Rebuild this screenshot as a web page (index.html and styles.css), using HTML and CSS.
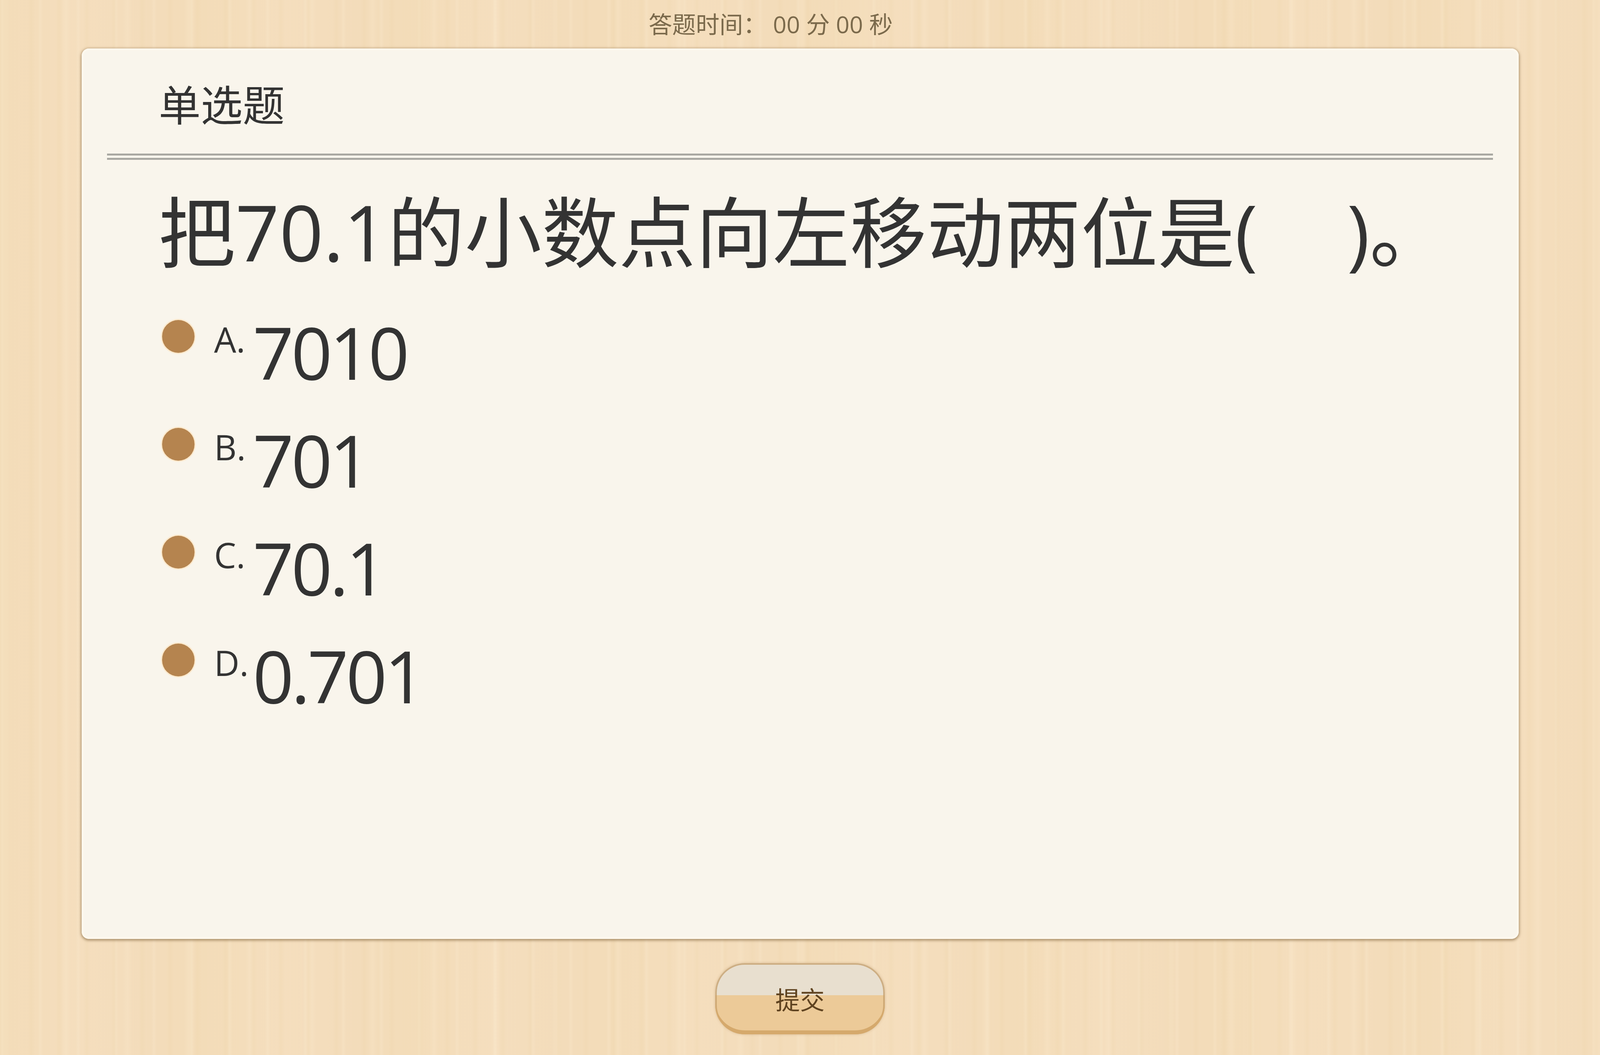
FILE: index.html
```html
<!DOCTYPE html>
<html lang="zh-CN">
<head>
<meta charset="utf-8">
<title>单选题</title>
<link rel="stylesheet" href="styles.css">
</head>
<body>
<header class="timer">答题时间： 00 分 00 秒</header>
<main class="card">
  <h2 class="kind">单选题</h2>
  <h1 class="question">把70.1的小数点向左移动两位是(<span class="blank"></span>)。</h1>
  <ul class="options">
    <li class="option"><span class="dot"></span><span class="letter">A.</span><span class="value">7010</span></li>
    <li class="option"><span class="dot"></span><span class="letter">B.</span><span class="value">701</span></li>
    <li class="option"><span class="dot"></span><span class="letter">C.</span><span class="value">70.1</span></li>
    <li class="option"><span class="dot"></span><span class="letter">D.</span><span class="value">0.701</span></li>
  </ul>
</main>
<footer class="actions"><button class="submit" type="button">提交</button></footer>
</body>
</html>
```
FILE: styles.css
```css
:root {
  --u: calc(100vw / 4799);
  --v: calc(100vh / 2700);
}
* { box-sizing: border-box; }
html, body { margin: 0; padding: 0; }
body {
  width: 100%;
  height: 100vh;
  overflow: hidden;
  display: flex;
  flex-direction: column;
  font-family: "Open Sans", "Noto Sans CJK SC", sans-serif;
  color: #333;
  background-color: #f4ddbc;
  background-image:
    repeating-linear-gradient(90deg, rgba(255,244,222,0) 0, rgba(255,244,222,.16) 6px, rgba(255,244,222,0) 13px, rgba(255,244,222,0) 97px),
    repeating-linear-gradient(90deg, rgba(234,208,160,0) 0, rgba(234,208,160,.16) 9px, rgba(234,208,160,0) 19px, rgba(234,208,160,0) 71px),
    repeating-linear-gradient(90deg, rgba(255,240,215,0) 0, rgba(255,240,215,.18) 12px, rgba(255,240,215,0) 24px, rgba(255,240,215,0) 157px),
    repeating-linear-gradient(90deg, rgba(240,216,170,.2) 0, rgba(248,226,196,.2) 211px, rgba(238,214,176,.14) 389px, rgba(240,216,170,.2) 523px);
}
.timer {
  flex: none;
  height: calc(var(--v) * 124);
  padding-right: calc(var(--u) * 176);
  display: flex;
  align-items: center;
  justify-content: center;
  font-size: calc(var(--u) * 71);
  line-height: calc(var(--v) * 124);
  color: #7b6a4c;
  white-space: pre;
}
.card {
  flex: none;
  height: calc(var(--v) * 2279);
  margin: 0 calc(var(--u) * 244) 0 calc(var(--u) * 245);
  padding: 0 calc(var(--u) * 77) 0 calc(var(--u) * 76);
  background: #f9f5ec;
  border-radius: calc(var(--u) * 22);
  box-shadow: inset 0 0 0 5px #fdf8ee, 0 2px 6px 2px rgba(125,95,55,.6);
}
.kind {
  margin: 0;
  height: calc(var(--v) * 285);
  padding: calc(var(--v) * 70) 0 0 calc(var(--u) * 155);
  border-bottom: calc(var(--v) * 16) double #a9a8a2;
  font-size: calc(var(--u) * 126);
  line-height: calc(var(--v) * 150);
  font-weight: 400;
}
.question {
  margin: 0;
  padding: calc(var(--v) * 14) 0 0 calc(var(--u) * 154);
  font-size: calc(var(--u) * 231);
  line-height: calc(var(--v) * 340);
  font-weight: 400;
  white-space: nowrap;
}
.blank { display: inline-block; width: calc(var(--u) * 268); }
.options {
  list-style: none;
  margin: calc(var(--v) * 49) 0 0;
  padding: 0 0 0 calc(var(--u) * 165);
}
.option {
  display: flex;
  align-items: flex-start;
  height: calc(var(--v) * 276);
}
.dot {
  flex: none;
  width: calc(var(--u) * 98);
  height: calc(var(--u) * 98);
  margin-top: calc(var(--v) * 49 - var(--u) * 49);
  border-radius: 50%;
  background: #b5844f;
  box-shadow: 0 0 0 3px #fbe9cd;
}
.letter {
  flex: none;
  width: calc(var(--u) * 116);
  margin-left: calc(var(--u) * 58);
  font-size: calc(var(--u) * 105);
  line-height: calc(var(--v) * 110);
}
.value {
  font-size: calc(var(--u) * 216);
  line-height: calc(var(--v) * 178);
  letter-spacing: calc(var(--u) * -8);
}
.actions {
  flex: 1;
  display: flex;
  justify-content: center;
  padding-top: calc(var(--v) * 62);
}
.submit {
  width: calc(var(--u) * 508);
  height: calc(var(--v) * 182);
  padding: 0;
  border: 0;
  border-radius: calc(var(--u) * 88);
  font: inherit;
  font-size: calc(var(--u) * 74);
  color: #5f4320;
  background: linear-gradient(180deg, #e8dfcf 0 45%, #ecca98 45% 100%);
  box-shadow: inset 0 -10px 0 #d5a96c, inset 0 0 0 4px rgba(196,158,105,.75), 0 0 6px rgba(170,130,80,.4);
}
```
